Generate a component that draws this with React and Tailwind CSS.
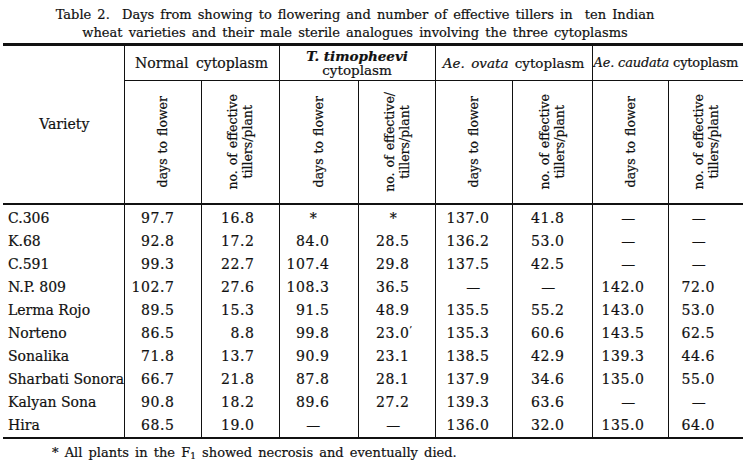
import React from 'react';

// Table 2 — flowering / tillers data, scanned journal page look
const rows = [
  ['C.306', '97.7', '16.8', '*', '*', '137.0', '41.8', '—', '—'],
  ['K.68', '92.8', '17.2', '84.0', '28.5', '136.2', '53.0', '—', '—'],
  ['C.591', '99.3', '22.7', '107.4', '29.8', '137.5', '42.5', '—', '—'],
  ['N.P. 809', '102.7', '27.6', '108.3', '36.5', '—', '—', '142.0', '72.0'],
  ['Lerma Rojo', '89.5', '15.3', '91.5', '48.9', '135.5', '55.2', '143.0', '53.0'],
  ['Norteno', '86.5', '8.8', '99.8', '23.0', '135.3', '60.6', '143.5', '62.5'],
  ['Sonalika', '71.8', '13.7', '90.9', '23.1', '138.5', '42.9', '139.3', '44.6'],
  ['Sharbati Sonora', '66.7', '21.8', '87.8', '28.1', '137.9', '34.6', '135.0', '55.0'],
  ['Kalyan Sona', '90.8', '18.2', '89.6', '27.2', '139.3', '63.6', '—', '—'],
  ['Hira', '68.5', '19.0', '—', '—', '136.0', '32.0', '135.0', '64.0'],
];

// distance from each column's right rule to the right edge of its numbers
const padRight = ['pr-[26px]', 'pr-[24px]', 'pr-[28px]', 'pr-[25px]', 'pr-[22px]', 'pr-[27px]', 'pr-[23px]', 'pr-[28px]'];

function Rotated({ children }) {
  return (
    <div className="flex h-[121px] items-center justify-center overflow-hidden">
      <span className="rotate-180 whitespace-nowrap text-center text-[12.5px] leading-[15px] [word-spacing:1px] [writing-mode:vertical-rl]">
        {children}
      </span>
    </div>
  );
}

function Value({ v }) {
  if (v === '*' || v === '—') {
    return <span className="inline-block w-[32px] text-center">{v}</span>;
  }
  if (v === '23.0') {
    // stray tick printed after this figure in the original
    return (
      <span className="relative inline-block">
        {v}
        <span className="absolute -right-[3px] -top-[3px] text-[9px]">ʼ</span>
      </span>
    );
  }
  return <span>{v}</span>;
}

export default function App() {
  return (
    <div className="h-[466px] w-[750px] overflow-hidden bg-white font-['DejaVu_Serif',serif] text-[#111] [-webkit-text-stroke:0.2px_#111]">
      <div className="pr-[40px] pt-[6px] text-center text-[13px] leading-[18px] [word-spacing:2px]">
        <p>Table 2.&nbsp; Days from showing to flowering and number of effective tillers in&nbsp; ten Indian</p>
        <p>wheat varieties and their male sterile analogues involving the three cytoplasms</p>
      </div>

      <table className="ml-[3px] mt-px w-[740px] table-fixed border-collapse text-[14px]">
        <colgroup>
          <col className="w-[121px]" />
          <col className="w-[77px]" />
          <col className="w-[78px]" />
          <col className="w-[79px]" />
          <col className="w-[77px]" />
          <col className="w-[77px]" />
          <col className="w-[80px]" />
          <col className="w-[76px]" />
          <col className="w-[75px]" />
        </colgroup>
        <thead>
          <tr className="h-[36px] border-t-[3px] border-[#111]">
            <th rowSpan={2} className="border-b-2 border-[#111] pl-[2px] font-normal">
              Variety
            </th>
            <th colSpan={2} className="whitespace-nowrap border-b border-l border-[#111] font-normal [word-spacing:3px]">
              Normal cytoplasm
            </th>
            <th colSpan={2} className="whitespace-nowrap border-b border-l border-[#111] text-[13.5px] font-normal leading-[14px]">
              <span className="font-bold italic">T. timopheevi</span>
              <br />
              cytoplasm
            </th>
            <th colSpan={2} className="whitespace-nowrap border-b border-l border-[#111] text-[13.5px] font-normal [word-spacing:2px]">
              <span className="italic">Ae. ovata</span> cytoplasm
            </th>
            <th colSpan={2} className="whitespace-nowrap border-b border-l border-[#111] pl-px text-left text-[13px] font-normal tracking-[-0.2px]">
              <span className="italic">Ae. caudata</span> cytoplasm
            </th>
          </tr>
          <tr className="h-[123px] border-b-2 border-[#111]">
            <th className="border-l border-[#111] font-normal"><Rotated>days to flower</Rotated></th>
            <th className="border-l border-[#111] font-normal"><Rotated>no. of effective<br />tillers/plant</Rotated></th>
            <th className="border-l border-[#111] font-normal"><Rotated>days to flower</Rotated></th>
            <th className="border-l border-[#111] font-normal"><Rotated>no. of effective/<br />tillers/plant</Rotated></th>
            <th className="border-l border-[#111] font-normal"><Rotated>days to flower</Rotated></th>
            <th className="border-l border-[#111] font-normal"><Rotated>no. of effective<br />tillers/plant</Rotated></th>
            <th className="border-l border-[#111] font-normal"><Rotated>days to flower</Rotated></th>
            <th className="border-l border-[#111] font-normal"><Rotated>no. of effective<br />tillers/plant</Rotated></th>
          </tr>
        </thead>
        <tbody className="border-b-2 border-[#111]">
          {rows.map((r, i) => (
            <tr key={r[0]} className={i === 0 ? 'h-[26px] align-bottom' : 'h-[23px]'}>
              <td className="whitespace-nowrap pl-[5px] leading-[23px]">{r[0]}</td>
              {r.slice(1).map((v, j) => (
                <td key={j} className={`border-l border-[#111] text-right leading-[23px] tracking-[0.6px] ${padRight[j]}`}>
                  <Value v={v} />
                </td>
              ))}
            </tr>
          ))}
        </tbody>
      </table>

      <p className="mt-[5px] pl-[52px] text-[13px] leading-[18px] [word-spacing:2px]">
        * All plants in the F<sub className="text-[9px]">1</sub> showed necrosis and eventually died.
      </p>
    </div>
  );
}
